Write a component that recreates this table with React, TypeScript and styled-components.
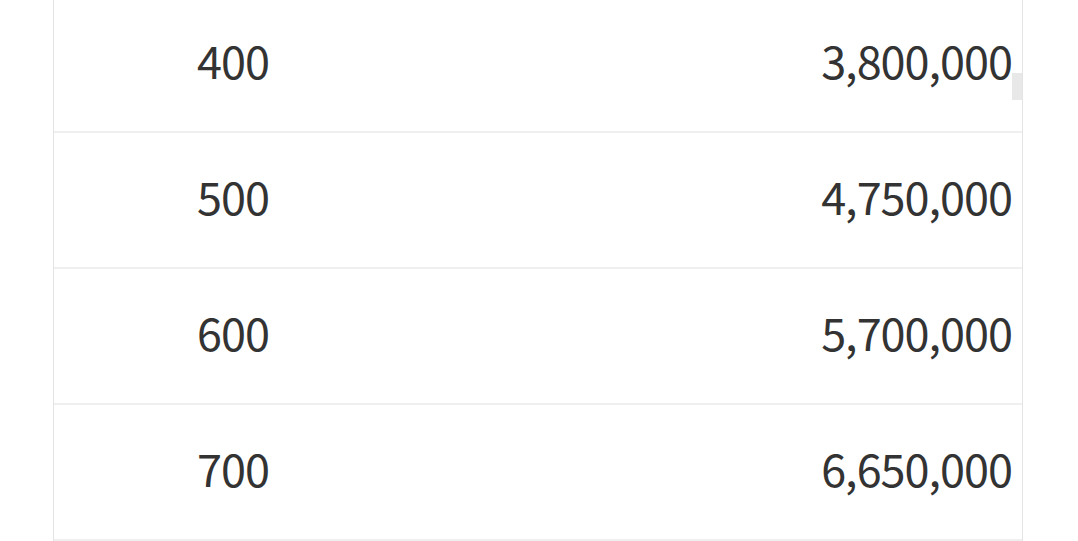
import React from "react";
import styled, { createGlobalStyle } from "styled-components";

const GlobalStyle = createGlobalStyle`
  html, body {
    margin: 0;
    padding: 0;
    background: #ffffff;
    overflow: hidden;
  }
  body {
    font-family: "Noto Sans CJK KR", "Noto Sans", sans-serif;
    color: #333333;
  }
`;

const Page = styled.div`
  width: 1078px;
  height: 541px;
  overflow: hidden;
`;

const Table = styled.div`
  position: relative;
  margin: -3px 0 0 53px;
  width: 968px;
  border: 1px solid #e4e4e4;
  border-top: none;
`;

const Row = styled.div`
  display: grid;
  grid-template-columns: 358px 1fr;
  align-items: center;
  height: 134px;
  border-bottom: 2px solid #efefef;

  &:last-child {
    border-bottom: none;
    height: 135px;
  }
`;

const Cell = styled.div<{ $align: "center" | "right" }>`
  text-align: ${(p) => p.$align};
  padding: 0 ${(p) => (p.$align === "right" ? "10px" : "0")} 10px 0;
  font-size: 45px;
  line-height: 1;
  letter-spacing: -1px;
`;

const ScrollThumb = styled.div`
  position: absolute;
  top: 76px;
  right: 0;
  width: 10px;
  height: 27px;
  background: #e8e8e8;
`;

const rows = [
  { qty: 400, price: 3800000 },
  { qty: 500, price: 4750000 },
  { qty: 600, price: 5700000 },
  { qty: 700, price: 6650000 },
];

function App() {
  return (
    <Page>
      <GlobalStyle />
      <Table>
        {rows.map((r) => (
          <Row key={r.qty}>
            <Cell $align="center">{r.qty}</Cell>
            <Cell $align="right">{r.price.toLocaleString("en-US")}</Cell>
          </Row>
        ))}
        <ScrollThumb />
      </Table>
    </Page>
  );
}

export default App;
